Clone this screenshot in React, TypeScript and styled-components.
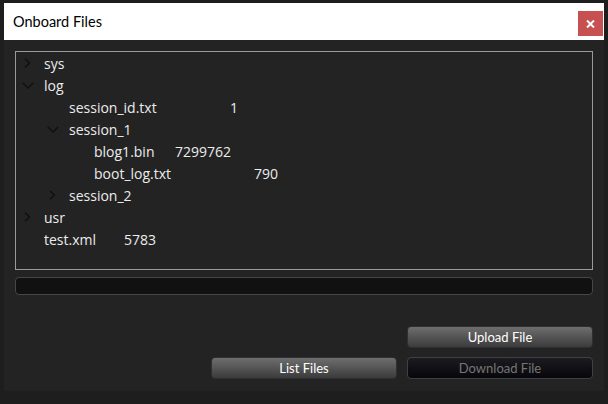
import React from "react";
import styled, { createGlobalStyle } from "styled-components";

const Global = createGlobalStyle`
  html, body { margin: 0; padding: 0; background: #1e1e1e; }
  body { font-family: "Open Sans", "Noto Sans", "Liberation Sans", sans-serif; }
  * { box-sizing: border-box; }
`;

const Page = styled.div`
  width: 608px;
  height: 404px;
  padding: 3px 4px 0 4px;
  background: #1e1e1e;
`;

const Dialog = styled.div`
  width: 600px;
  display: flex;
  flex-direction: column;
`;

const TitleBar = styled.div`
  height: 37px;
  background: #ffffff;
  display: flex;
  align-items: center;
  justify-content: space-between;
  padding-left: 9px;
  padding-right: 1px;
`;

const Title = styled.span`
  font-family: Lato, "Open Sans", sans-serif;
  font-size: 14.5px;
  color: #000;
  line-height: 1;
  margin-top: 1px;
`;

const CloseButton = styled.button`
  width: 25px;
  height: 25px;
  align-self: flex-end;
  margin-bottom: 4px;
  background: #c75050;
  border: none;
  padding: 0;
  display: flex;
  align-items: center;
  justify-content: center;
  cursor: pointer;
`;

const Body = styled.div`
  background: #232323;
  padding: 11px 11px 12px 11px;
  display: flex;
  flex-direction: column;
`;

const TreeBox = styled.div`
  height: 219px;
  border: 1px solid #9a9a9c;
  display: flex;
  flex-direction: column;
`;

const Row = styled.div<{ $col: number }>`
  height: 22px;
  display: grid;
  grid-template-columns: ${(p) => p.$col}px auto;
  align-items: center;
  font-size: 14px;
  color: #ececec;
`;

const NameCell = styled.div<{ $level: number }>`
  display: flex;
  align-items: center;
  padding-left: ${(p) => p.$level * 25}px;
  white-space: nowrap;
`;

const ArrowCell = styled.span`
  width: 23px;
  height: 22px;
  display: flex;
  align-items: center;
  justify-content: center;
  flex: none;
`;

const Name = styled.span`
  margin-left: 5px;
`;

const Size = styled.span`
  white-space: nowrap;
`;

const Progress = styled.div`
  margin-top: 7px;
  height: 18px;
  border: 1px solid #464646;
  border-radius: 4px;
  background: #111111;
`;

const ButtonGrid = styled.div`
  margin-top: 31px;
  display: grid;
  grid-template-columns: repeat(3, 1fr);
  column-gap: 10px;
  row-gap: 9px;
`;

const Button = styled.button<{ $col: number; $row: number; $disabled?: boolean }>`
  grid-column: ${(p) => p.$col};
  grid-row: ${(p) => p.$row};
  height: 22px;
  border-radius: 4px;
  border: 1px solid ${(p) => (p.$disabled ? "#3c4048" : "#2e3033")};
  background: ${(p) =>
    p.$disabled
      ? "linear-gradient(#1c1c20, #07070b)"
      : "linear-gradient(#6e6e6e, #3b3b3b)"};
  color: ${(p) => (p.$disabled ? "#767676" : "#ffffff")};
  font-family: Lato, "Open Sans", sans-serif;
  font-size: 13px;
  padding: 0;
  line-height: 1;
`;

const Chevron = ({ open }: { open: boolean }) =>
  open ? (
    <svg width="12" height="7" viewBox="0 0 12 7">
      <path d="M0.7 0.7 L6 6 L11.3 0.7" fill="none" stroke="#101010" strokeWidth="1.4" />
    </svg>
  ) : (
    <svg width="7" height="10" viewBox="0 0 7 10">
      <path d="M1 0.7 L5.5 5 L1 9.3" fill="none" stroke="#101010" strokeWidth="1.4" />
    </svg>
  );

type Item = { name: string; level: number; arrow?: "open" | "closed"; size?: string; sizeX?: number };

const items: Item[] = [
  { name: "sys", level: 0, arrow: "closed" },
  { name: "log", level: 0, arrow: "open" },
  { name: "session_id.txt", level: 1, size: "1", sizeX: 230 },
  { name: "session_1", level: 1, arrow: "open" },
  { name: "blog1.bin", level: 2, size: "7299762", sizeX: 175 },
  { name: "boot_log.txt", level: 2, size: "790", sizeX: 254 },
  { name: "session_2", level: 1, arrow: "closed" },
  { name: "usr", level: 0, arrow: "closed" },
  { name: "test.xml", level: 0, size: "5783", sizeX: 124 },
];

export default function App() {
  return (
    <>
      <Global />
      <Page>
        <Dialog>
          <TitleBar>
            <Title>Onboard Files</Title>
            <CloseButton aria-label="close">
              <svg width="9" height="8" viewBox="0 0 9 8">
                <path d="M1 0.5 L8 7.5 M8 0.5 L1 7.5" stroke="#fff" strokeWidth="2" />
              </svg>
            </CloseButton>
          </TitleBar>
          <Body>
            <TreeBox>
              {items.map((it) => (
                <Row key={it.name} $col={(it.sizeX ?? 300) - 16}>
                  <NameCell $level={it.level}>
                    <ArrowCell>{it.arrow && <Chevron open={it.arrow === "open"} />}</ArrowCell>
                    <Name>{it.name}</Name>
                  </NameCell>
                  {it.size && <Size>{it.size}</Size>}
                </Row>
              ))}
            </TreeBox>
            <Progress />
            <ButtonGrid>
              <Button $col={3} $row={1}>Upload File</Button>
              <Button $col={2} $row={2}>List Files</Button>
              <Button $col={3} $row={2} $disabled>Download File</Button>
            </ButtonGrid>
          </Body>
        </Dialog>
      </Page>
    </>
  );
}
